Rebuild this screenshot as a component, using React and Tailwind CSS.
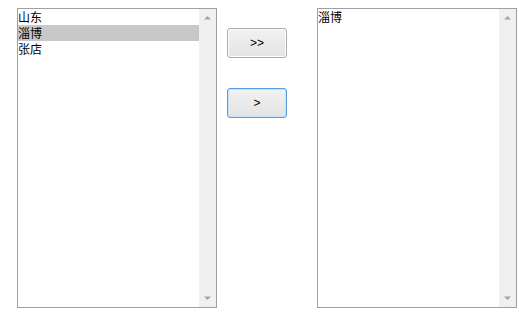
import React from "react";

const font = { fontFamily: '"Noto Sans CJK SC", "Liberation Sans", sans-serif' };

function ListBox({ items, selected }) {
  return (
    <div className="flex h-[300px] w-[200px] border border-[#a0a0a0] bg-white">
      <div className="flex-1 flex flex-col">
        {items.map((it, i) => (
          <div
            key={i}
            className={`h-[16px] text-[12px] leading-[16px] text-black ${i === selected ? "bg-[#c8c8c8]" : ""}`}
            style={font}
          >
            {it}
          </div>
        ))}
      </div>
      <div className="flex w-[17px] flex-col justify-between bg-[#f0f0f0] py-[6px]">
        <svg width="17" height="5" viewBox="0 0 17 5">
          <path d="M5 4.5 L8.5 1 L12 4.5 Z" fill="#a3a3a3" />
        </svg>
        <svg width="17" height="5" viewBox="0 0 17 5">
          <path d="M5 0.5 L8.5 4 L12 0.5 Z" fill="#a3a3a3" />
        </svg>
      </div>
    </div>
  );
}

function Btn({ children, focused }) {
  return (
    <button
      className={`h-[30px] w-[60px] rounded-[3px] border text-[12px] text-black ${
        focused
          ? "border-[#569de5] shadow-[inset_0_0_0_1px_#c4e0fa]"
          : "border-[#acacac] shadow-[inset_0_0_0_1px_#fcfcfc]"
      } bg-gradient-to-b from-[#f2f2f2] to-[#e3e3e3]`}
      style={{ fontFamily: '"Liberation Sans", sans-serif' }}
    >
      {children}
    </button>
  );
}

export default function App() {
  return (
    <div className="flex h-[312px] w-[519px] bg-white pl-[17px] pt-[8px]">
      <ListBox items={["山东", "淄博", "张店"]} selected={1} />
      <div className="ml-[10px] mr-[30px] flex flex-col gap-[30px] pt-[20px]">
        <Btn>&gt;&gt;</Btn>
        <Btn focused>&gt;</Btn>
      </div>
      <ListBox items={["淄博"]} selected={-1} />
    </div>
  );
}
